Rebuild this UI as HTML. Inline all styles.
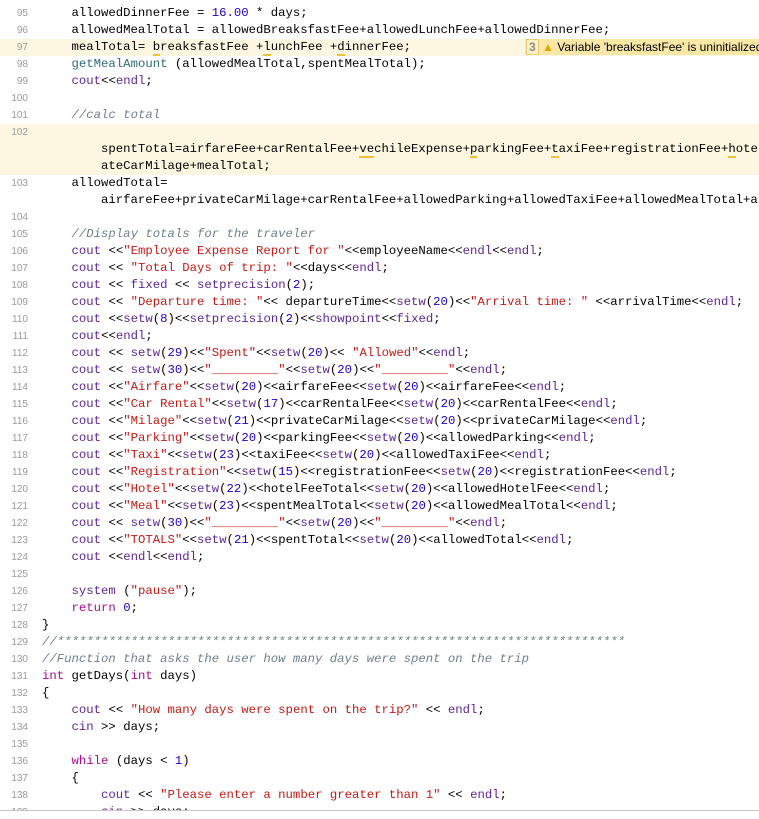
<!DOCTYPE html>
<html><head><meta charset="utf-8"><style>
body{margin:0;width:759px;height:819px;overflow:hidden;background:#fff;position:relative}
.r{position:absolute;left:0;width:759px;height:17px;line-height:17px;overflow:hidden}
.h{background:#fdf6e1}
.g{position:absolute;left:0;width:28px;text-align:right;font:10px "Liberation Sans",sans-serif;color:#9a9a9a;line-height:17px}
.t{position:absolute;left:42px;white-space:pre;font:12.3px "Liberation Mono",monospace;color:#000;line-height:17px}
.k{color:#aa0d91}.l{color:#5c2699}.s{color:#c41a16}.n{color:#1c00cf}.c{color:#707f8c;font-style:italic}.f{color:#2e6c76}
u{text-decoration:none;border-bottom:2px solid #f1c232}
.badge{position:absolute;left:525px;top:39px;height:16px;width:234px;overflow:hidden;background:#f9e7a6;font:12px "Liberation Sans",sans-serif;line-height:16px;white-space:nowrap}
.bn{display:inline-block;background:#fdf1c4;border:1px solid #e8cd70;color:#8a8a8a;font-weight:bold;padding:0 2px;height:14px;line-height:14px;margin-left:1px}
.bot{position:absolute;left:0;top:810px;width:759px;height:1px;background:#c8c8c8}
</style></head><body>
<div class="r" style="top:4.5px"><span class="g">95</span><span class="t">    allowedDinnerFee = <span class="n">16.00</span> * days;</span></div>
<div class="r" style="top:21.5px"><span class="g">96</span><span class="t">    allowedMealTotal = allowedBreaksfastFee+allowedLunchFee+allowedDinnerFee;</span></div>
<div class="r h" style="top:38.5px"><span class="g">97</span><span class="t">    mealTotal= <u>b</u>reaksfastFee +<u>l</u>unchFee +<u>d</u>innerFee;</span></div>
<div class="badge"><span class="bn">3</span> <span style="color:#e0a800">&#9650;</span> Variable 'breaksfastFee' is uninitialized</div>
<div class="r" style="top:55.5px"><span class="g">98</span><span class="t">    <span class="f">getMealAmount</span> (allowedMealTotal,spentMealTotal);</span></div>
<div class="r" style="top:72.5px"><span class="g">99</span><span class="t">    <span class="l">cout</span>&lt;&lt;<span class="l">endl</span>;</span></div>
<div class="r" style="top:89.5px"><span class="g">100</span></div>
<div class="r" style="top:106.5px"><span class="g">101</span><span class="t">    <span class="c">//calc total</span></span></div>
<div class="r h" style="top:123.5px;height:51px"><span class="g">102</span></div>
<div class="r" style="top:140.5px"><span class="t">        spentTotal=airfareFee+carRentalFee+<u>ve</u>chileExpense+<u>p</u>arkingFee+<u>t</u>axiFee+registrationFee+<u>h</u>otelFeeTotal+priv</span></div>
<div class="r" style="top:157.5px"><span class="t">        ateCarMilage+mealTotal;</span></div>
<div class="r" style="top:174.5px"><span class="g">103</span><span class="t">    allowedTotal=</span></div>
<div class="r" style="top:191.5px"><span class="t">        airfareFee+privateCarMilage+carRentalFee+allowedParking+allowedTaxiFee+allowedMealTotal+allowed</span></div>
<div class="r" style="top:208.5px"><span class="g">104</span></div>
<div class="r" style="top:225.5px"><span class="g">105</span><span class="t">    <span class="c">//Display totals for the traveler</span></span></div>
<div class="r" style="top:242.5px"><span class="g">106</span><span class="t">    <span class="l">cout</span> &lt;&lt;<span class="s">"Employee Expense Report for "</span>&lt;&lt;employeeName&lt;&lt;<span class="l">endl</span>&lt;&lt;<span class="l">endl</span>;</span></div>
<div class="r" style="top:259.5px"><span class="g">107</span><span class="t">    <span class="l">cout</span> &lt;&lt; <span class="s">"Total Days of trip: "</span>&lt;&lt;days&lt;&lt;<span class="l">endl</span>;</span></div>
<div class="r" style="top:276.5px"><span class="g">108</span><span class="t">    <span class="l">cout</span> &lt;&lt; <span class="l">fixed</span> &lt;&lt; <span class="l">setprecision</span>(<span class="n">2</span>);</span></div>
<div class="r" style="top:293.5px"><span class="g">109</span><span class="t">    <span class="l">cout</span> &lt;&lt; <span class="s">"Departure time: "</span>&lt;&lt; departureTime&lt;&lt;<span class="l">setw</span>(<span class="n">20</span>)&lt;&lt;<span class="s">"Arrival time: "</span> &lt;&lt;arrivalTime&lt;&lt;<span class="l">endl</span>;</span></div>
<div class="r" style="top:310.5px"><span class="g">110</span><span class="t">    <span class="l">cout</span> &lt;&lt;<span class="l">setw</span>(<span class="n">8</span>)&lt;&lt;<span class="l">setprecision</span>(<span class="n">2</span>)&lt;&lt;<span class="l">showpoint</span>&lt;&lt;<span class="l">fixed</span>;</span></div>
<div class="r" style="top:327.5px"><span class="g">111</span><span class="t">    <span class="l">cout</span>&lt;&lt;<span class="l">endl</span>;</span></div>
<div class="r" style="top:344.5px"><span class="g">112</span><span class="t">    <span class="l">cout</span> &lt;&lt; <span class="l">setw</span>(<span class="n">29</span>)&lt;&lt;<span class="s">"Spent"</span>&lt;&lt;<span class="l">setw</span>(<span class="n">20</span>)&lt;&lt; <span class="s">"Allowed"</span>&lt;&lt;<span class="l">endl</span>;</span></div>
<div class="r" style="top:361.5px"><span class="g">113</span><span class="t">    <span class="l">cout</span> &lt;&lt; <span class="l">setw</span>(<span class="n">30</span>)&lt;&lt;<span class="s">"_________"</span>&lt;&lt;<span class="l">setw</span>(<span class="n">20</span>)&lt;&lt;<span class="s">"_________"</span>&lt;&lt;<span class="l">endl</span>;</span></div>
<div class="r" style="top:378.5px"><span class="g">114</span><span class="t">    <span class="l">cout</span> &lt;&lt;<span class="s">"Airfare"</span>&lt;&lt;<span class="l">setw</span>(<span class="n">20</span>)&lt;&lt;airfareFee&lt;&lt;<span class="l">setw</span>(<span class="n">20</span>)&lt;&lt;airfareFee&lt;&lt;<span class="l">endl</span>;</span></div>
<div class="r" style="top:395.5px"><span class="g">115</span><span class="t">    <span class="l">cout</span> &lt;&lt;<span class="s">"Car Rental"</span>&lt;&lt;<span class="l">setw</span>(<span class="n">17</span>)&lt;&lt;carRentalFee&lt;&lt;<span class="l">setw</span>(<span class="n">20</span>)&lt;&lt;carRentalFee&lt;&lt;<span class="l">endl</span>;</span></div>
<div class="r" style="top:412.5px"><span class="g">116</span><span class="t">    <span class="l">cout</span> &lt;&lt;<span class="s">"Milage"</span>&lt;&lt;<span class="l">setw</span>(<span class="n">21</span>)&lt;&lt;privateCarMilage&lt;&lt;<span class="l">setw</span>(<span class="n">20</span>)&lt;&lt;privateCarMilage&lt;&lt;<span class="l">endl</span>;</span></div>
<div class="r" style="top:429.5px"><span class="g">117</span><span class="t">    <span class="l">cout</span> &lt;&lt;<span class="s">"Parking"</span>&lt;&lt;<span class="l">setw</span>(<span class="n">20</span>)&lt;&lt;parkingFee&lt;&lt;<span class="l">setw</span>(<span class="n">20</span>)&lt;&lt;allowedParking&lt;&lt;<span class="l">endl</span>;</span></div>
<div class="r" style="top:446.5px"><span class="g">118</span><span class="t">    <span class="l">cout</span> &lt;&lt;<span class="s">"Taxi"</span>&lt;&lt;<span class="l">setw</span>(<span class="n">23</span>)&lt;&lt;taxiFee&lt;&lt;<span class="l">setw</span>(<span class="n">20</span>)&lt;&lt;allowedTaxiFee&lt;&lt;<span class="l">endl</span>;</span></div>
<div class="r" style="top:463.5px"><span class="g">119</span><span class="t">    <span class="l">cout</span> &lt;&lt;<span class="s">"Registration"</span>&lt;&lt;<span class="l">setw</span>(<span class="n">15</span>)&lt;&lt;registrationFee&lt;&lt;<span class="l">setw</span>(<span class="n">20</span>)&lt;&lt;registrationFee&lt;&lt;<span class="l">endl</span>;</span></div>
<div class="r" style="top:480.5px"><span class="g">120</span><span class="t">    <span class="l">cout</span> &lt;&lt;<span class="s">"Hotel"</span>&lt;&lt;<span class="l">setw</span>(<span class="n">22</span>)&lt;&lt;hotelFeeTotal&lt;&lt;<span class="l">setw</span>(<span class="n">20</span>)&lt;&lt;allowedHotelFee&lt;&lt;<span class="l">endl</span>;</span></div>
<div class="r" style="top:497.5px"><span class="g">121</span><span class="t">    <span class="l">cout</span> &lt;&lt;<span class="s">"Meal"</span>&lt;&lt;<span class="l">setw</span>(<span class="n">23</span>)&lt;&lt;spentMealTotal&lt;&lt;<span class="l">setw</span>(<span class="n">20</span>)&lt;&lt;allowedMealTotal&lt;&lt;<span class="l">endl</span>;</span></div>
<div class="r" style="top:514.5px"><span class="g">122</span><span class="t">    <span class="l">cout</span> &lt;&lt; <span class="l">setw</span>(<span class="n">30</span>)&lt;&lt;<span class="s">"_________"</span>&lt;&lt;<span class="l">setw</span>(<span class="n">20</span>)&lt;&lt;<span class="s">"_________"</span>&lt;&lt;<span class="l">endl</span>;</span></div>
<div class="r" style="top:531.5px"><span class="g">123</span><span class="t">    <span class="l">cout</span> &lt;&lt;<span class="s">"TOTALS"</span>&lt;&lt;<span class="l">setw</span>(<span class="n">21</span>)&lt;&lt;spentTotal&lt;&lt;<span class="l">setw</span>(<span class="n">20</span>)&lt;&lt;allowedTotal&lt;&lt;<span class="l">endl</span>;</span></div>
<div class="r" style="top:548.5px"><span class="g">124</span><span class="t">    <span class="l">cout</span> &lt;&lt;<span class="l">endl</span>&lt;&lt;<span class="l">endl</span>;</span></div>
<div class="r" style="top:565.5px"><span class="g">125</span></div>
<div class="r" style="top:582.5px"><span class="g">126</span><span class="t">    <span class="l">system</span> (<span class="s">"pause"</span>);</span></div>
<div class="r" style="top:599.5px"><span class="g">127</span><span class="t">    <span class="k">return</span> <span class="n">0</span>;</span></div>
<div class="r" style="top:616.5px"><span class="g">128</span><span class="t">}</span></div>
<div class="r" style="top:633.5px"><span class="g">129</span><span class="t"><span class="c">//*****************************************************************************</span></span></div>
<div class="r" style="top:650.5px"><span class="g">130</span><span class="t"><span class="c">//Function that asks the user how many days were spent on the trip</span></span></div>
<div class="r" style="top:667.5px"><span class="g">131</span><span class="t"><span class="k">int</span> getDays(<span class="k">int</span> days)</span></div>
<div class="r" style="top:684.5px"><span class="g">132</span><span class="t">{</span></div>
<div class="r" style="top:701.5px"><span class="g">133</span><span class="t">    <span class="l">cout</span> &lt;&lt; <span class="s">"How many days were spent on the trip?"</span> &lt;&lt; <span class="l">endl</span>;</span></div>
<div class="r" style="top:718.5px"><span class="g">134</span><span class="t">    <span class="l">cin</span> &gt;&gt; days;</span></div>
<div class="r" style="top:735.5px"><span class="g">135</span></div>
<div class="r" style="top:752.5px"><span class="g">136</span><span class="t">    <span class="k">while</span> (days &lt; <span class="n">1</span>)</span></div>
<div class="r" style="top:769.5px"><span class="g">137</span><span class="t">    {</span></div>
<div class="r" style="top:786.5px"><span class="g">138</span><span class="t">        <span class="l">cout</span> &lt;&lt; <span class="s">"Please enter a number greater than 1"</span> &lt;&lt; <span class="l">endl</span>;</span></div>
<div class="r" style="top:803.5px;height:7px"><span class="g">139</span><span class="t">        <span class="l">cin</span> &gt;&gt; days;</span></div>
<div class="bot"></div>
</body></html>
